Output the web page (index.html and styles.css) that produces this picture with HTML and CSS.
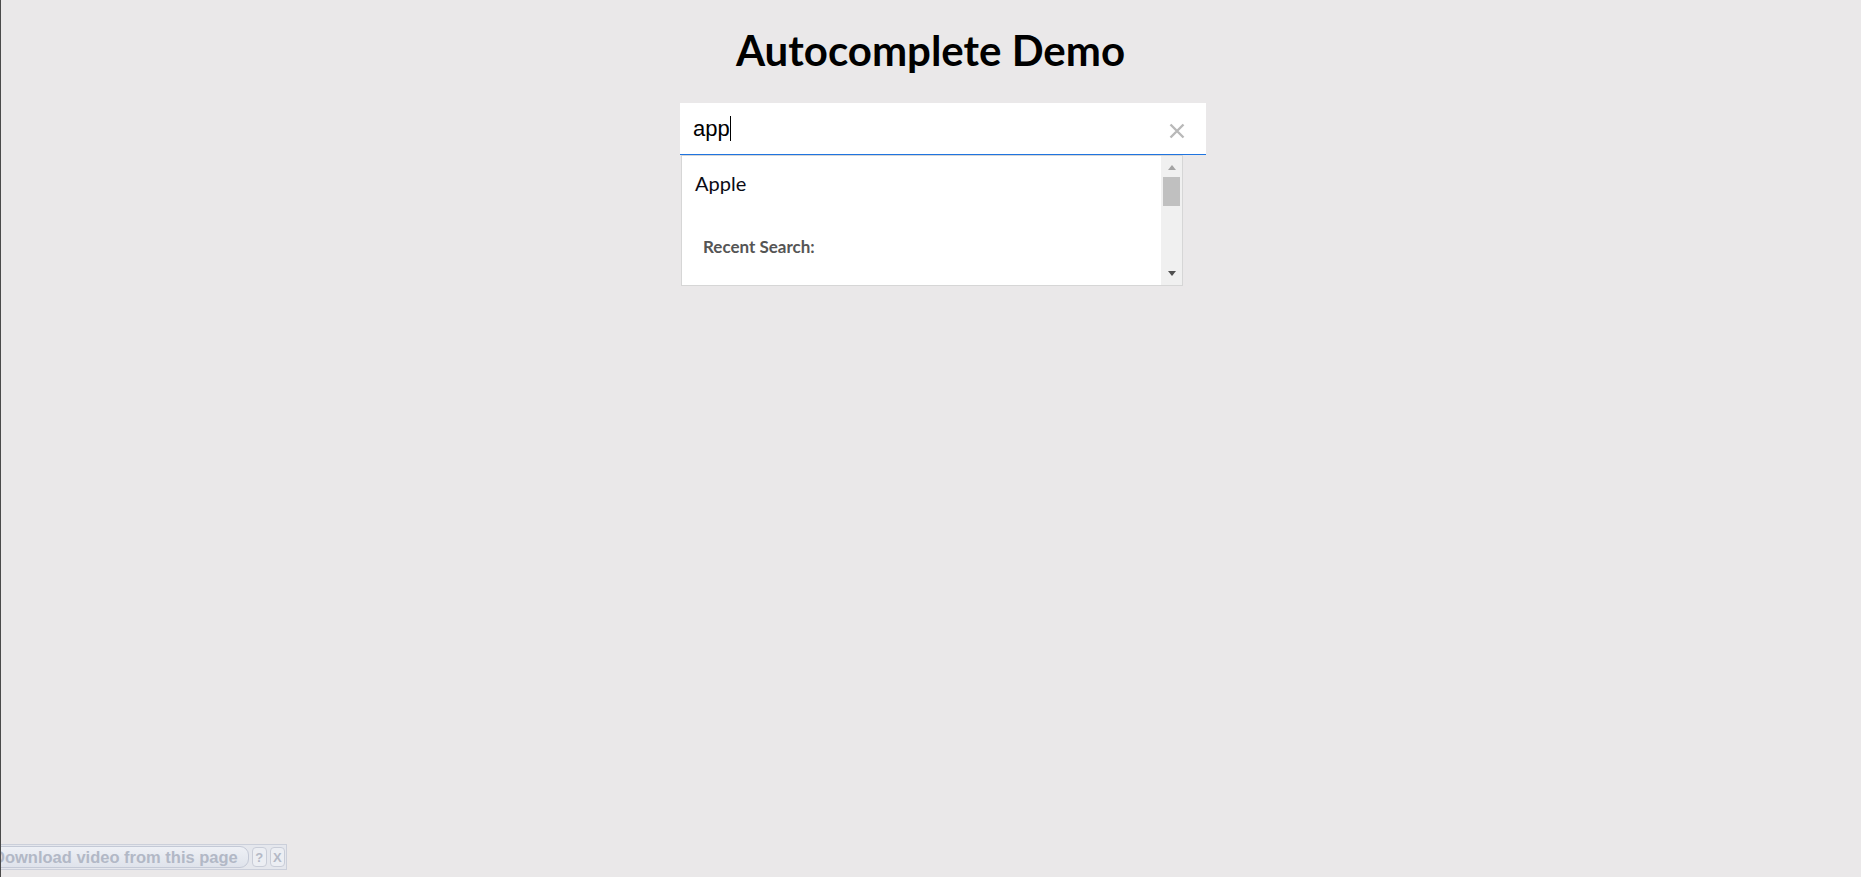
FILE: index.html
```html
<!DOCTYPE html>
<html lang="en">
<head>
<meta charset="utf-8">
<title>Autocomplete Demo</title>
<link rel="stylesheet" href="styles.css">
</head>
<body>
<div class="edge"></div>
<main class="page">
  <h1 class="title">Autocomplete Demo</h1>
  <div class="search">
    <div class="field">
      <span class="value">app</span><span class="caret"></span>
      <button class="clear" aria-label="Clear">
        <svg width="16" height="16" viewBox="0 0 16 16"><path d="M1.5 1.5 L14.5 14.5 M14.5 1.5 L1.5 14.5" stroke="#b9b9b9" stroke-width="2.4" fill="none"/></svg>
      </button>
    </div>
    <div class="dropdown">
      <div class="list">
        <div class="item">Apple</div>
        <div class="group">Recent Search:</div>
      </div>
      <div class="scrollbar">
        <span class="arrow up"></span>
        <span class="thumb"></span>
        <span class="spacer"></span>
        <span class="arrow down"></span>
      </div>
    </div>
  </div>
</main>
<div class="dl-bar">
  <span class="dl-btn">Download video from this page</span>
  <span class="dl-mini">?</span>
  <span class="dl-mini">X</span>
</div>
</body>
</html>
```
FILE: styles.css
```css
html, body {
  margin: 0;
  padding: 0;
  height: 100%;
}
body {
  background: #eae8e9;
  font-family: "Lato", "Open Sans", sans-serif;
  overflow: hidden;
}
.edge {
  position: fixed;
  left: 0;
  top: 0;
  bottom: 0;
  width: 1px;
  background: #4a4a4a;
  z-index: 5;
}
.page {
  padding-top: 24px;
}
.title {
  margin: 0;
  text-align: center;
  font-family: "Lato", sans-serif;
  font-weight: 700;
  font-size: 42px;
  line-height: 52px;
  color: #000;
}
.search {
  width: 526px;
  margin: 27px 0 0 680px;
}
.field {
  display: flex;
  align-items: center;
  height: 51px;
  padding: 0 21px 0 13px;
  background: #fff;
  border-bottom: 1px solid #1f74e0;
}
.value {
  font-family: "Liberation Sans", Arial, sans-serif;
  font-size: 22px;
  color: #000;
}
.caret {
  width: 1px;
  height: 25px;
  background: #000;
}
.clear {
  margin-left: auto;
  margin-top: 4px;
  padding: 0;
  border: 0;
  background: none;
  width: 16px;
  height: 16px;
  display: flex;
}
.dropdown {
  display: flex;
  width: 500px;
  height: 129px;
  margin-left: 1px;
  background: #fff;
  border: 1px solid #d6d6d6;
}
.list {
  flex: 1;
  overflow: hidden;
}
.item {
  padding: 15px 13px 13px;
  font-size: 20px;
  line-height: 24px;
  color: #0a0a14;
}
.group {
  padding: 29px 21px 10px;
  font-size: 17px;
  line-height: 20px;
  font-weight: 700;
  color: #555;
}
.scrollbar {
  width: 21px;
  background: #f0f0f0;
  display: flex;
  flex-direction: column;
  align-items: center;
  padding: 9px 0;
}
.arrow {
  width: 0;
  height: 0;
  border-left: 4.5px solid transparent;
  border-right: 4.5px solid transparent;
}
.arrow.up {
  border-bottom: 5px solid #a3a3a3;
}
.arrow.down {
  border-top: 5px solid #505050;
}
.thumb {
  width: 17px;
  height: 29px;
  margin-top: 7px;
  background: #c0c0c0;
}
.spacer {
  flex: 1;
}
.dl-bar {
  position: fixed;
  left: -10px;
  top: 844px;
  height: 24px;
  width: 295px;
  display: flex;
  align-items: center;
  gap: 3px;
  background: #e5e7ed;
  border: 1px solid #cbcfda;
  font-family: "Liberation Sans", Arial, sans-serif;
}
.dl-btn {
  display: flex;
  align-items: center;
  height: 20px;
  padding: 0 10px 0 1px;
  background: linear-gradient(#eef0f5, #dfe3eb);
  border: 1px solid #c4c9d6;
  border-radius: 0 9px 9px 0;
  font-weight: 700;
  font-size: 16.5px;
  color: #b2b8c6;
  white-space: nowrap;
}
.dl-mini {
  display: flex;
  align-items: center;
  justify-content: center;
  width: 13px;
  height: 18px;
  border: 1px solid #c9cdd8;
  border-radius: 4px;
  background: #eceef3;
  font-size: 13px;
  font-weight: 700;
  color: #b4b9c6;
}
```
